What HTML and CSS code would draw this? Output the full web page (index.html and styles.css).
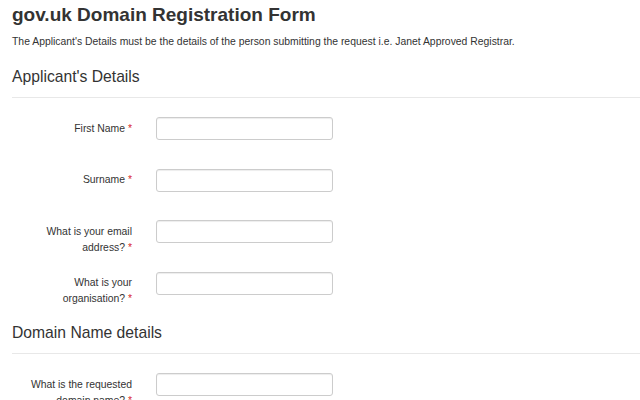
FILE: index.html
```html
<!DOCTYPE html>
<html lang="en">
<head>
  <meta charset="UTF-8">
  <title>gov.uk Domain Registration Form</title>
  <link rel="stylesheet" href="styles.css">
</head>
<body>
<div class="container">
  <h1>gov.uk Domain Registration Form</h1>
  <p class="intro">The Applicant's Details must be the details of the person submitting the request i.e. Janet Approved Registrar.</p>

  <form>
    <fieldset class="first">
      <legend>Applicant's Details</legend>
      <div class="form-group">
        <label for="first">First Name <span class="req">*</span></label>
        <input type="text" id="first">
      </div>
      <div class="form-group">
        <label for="surname">Surname <span class="req">*</span></label>
        <input type="text" id="surname">
      </div>
      <div class="form-group">
        <label for="email">What is your email address? <span class="req">*</span></label>
        <input type="text" id="email">
      </div>
      <div class="form-group">
        <label for="org">What is your organisation? <span class="req">*</span></label>
        <input type="text" id="org">
      </div>
    </fieldset>

    <fieldset>
      <legend>Domain Name details</legend>
      <div class="form-group">
        <label for="domain">What is the requested domain name? <span class="req">*</span></label>
        <input type="text" id="domain">
      </div>
    </fieldset>
  </form>
</div>
</body>
</html>
```

FILE: styles.css
```css
body {
  margin: 0;
  font-family: "Liberation Sans", Arial, sans-serif;
  color: #333;
  background: #fff;
}

.container {
  padding: 0 0 0 12px;
}

h1 {
  margin: 0;
  padding-top: 5px;
  font-size: 19px;
  line-height: 20px;
  font-weight: bold;
}

.intro {
  margin: 10px 0 0 0;
  font-size: 10.4px;
  line-height: 14px;
}

fieldset {
  border: 0;
  margin: 0;
  padding: 0;
  min-width: 0;
}

fieldset.first {
  margin-top: 18px;
}

legend {
  display: block;
  width: 100%;
  padding: 0 0 10px 0;
  margin: 0 0 19px 0;
  font-size: 15.7px;
  line-height: 20px;
  border-bottom: 1px solid #e8e8e8;
}

.form-group {
  display: grid;
  grid-template-columns: 110px 177px;
  column-gap: 24px;
  align-items: start;
  padding-left: 10px;
  height: 51.5px;
}

label {
  text-align: right;
  font-size: 10.4px;
  line-height: 16px;
  padding-top: 3.5px;
}

.req {
  color: #d9262c;
}

input {
  box-sizing: border-box;
  height: 23px;
  width: 177px;
  margin: 0;
  border: 1px solid #ccc;
  border-radius: 3px;
  box-shadow: inset 0 1px 1px rgba(0, 0, 0, 0.075);
  background: #fff;
  font-family: inherit;
}
```
